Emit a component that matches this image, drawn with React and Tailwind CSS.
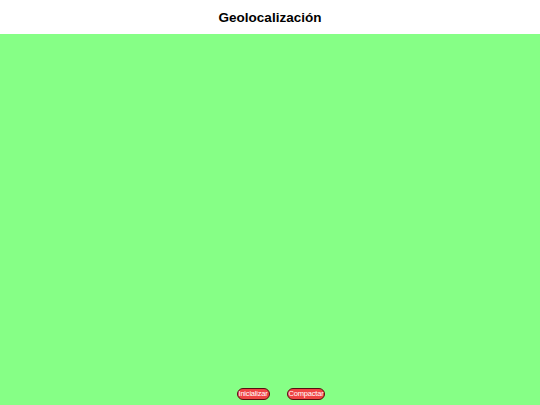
export default function App() {
  return (
    <div className="w-[540px] h-[405px] flex flex-col bg-[#86ff86] font-['Liberation_Sans',Arial,sans-serif]">
      <header className="h-[34px] shrink-0 bg-white flex items-center justify-center pt-[3px]">
        <h1 className="text-[13.5px] font-bold text-black">Geolocalización</h1>
      </header>
      <main className="flex-1 flex flex-col justify-end items-center pb-[5px]">
        <div className="flex gap-[17px] ml-[22px]">
          <button className="h-[12px] px-[1px] rounded-full bg-[#ee4444] border border-[#551111] text-white text-[7.5px] leading-none tracking-[-0.2px]">
            Inicializar
          </button>
          <button className="h-[12px] px-[1px] rounded-full bg-[#ee4444] border border-[#551111] text-white text-[7.5px] leading-none tracking-[-0.2px]">
            Compactar
          </button>
        </div>
      </main>
    </div>
  );
}
